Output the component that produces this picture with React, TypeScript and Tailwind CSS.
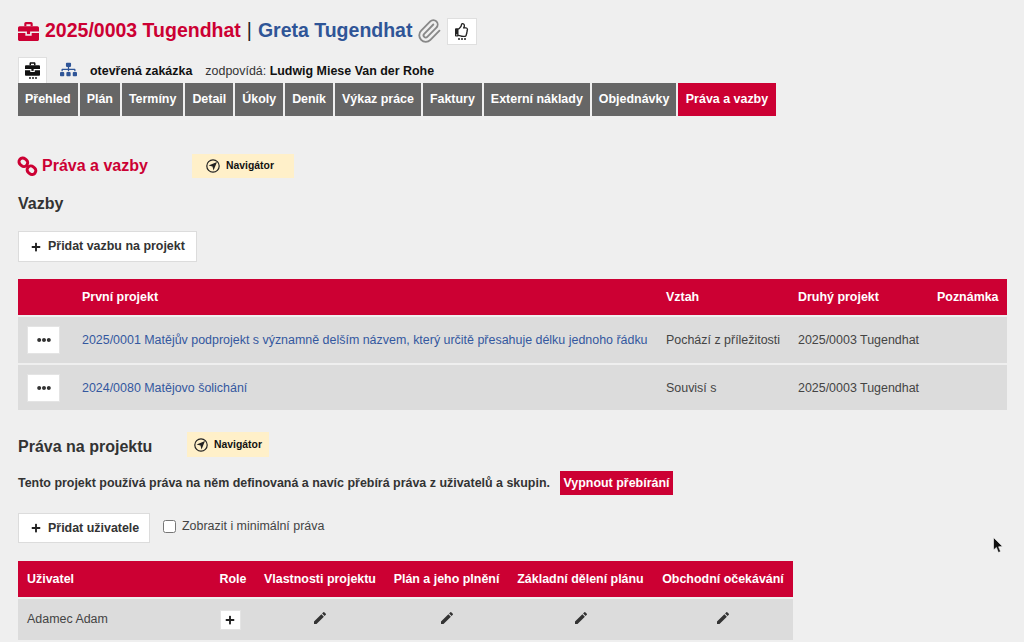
import React from 'react';
import { FaRegThumbsUp, FaSitemap, FaPlus, FaEllipsisH } from 'react-icons/fa';
import { MdEdit } from 'react-icons/md';
import { Paperclip } from 'lucide-react';

const tabs = ['Přehled', 'Plán', 'Termíny', 'Detail', 'Úkoly', 'Deník', 'Výkaz práce', 'Faktury', 'Externí náklady', 'Objednávky'];

const Dots = () => (
  <span className="flex gap-[1px] justify-center mt-[1px]">
    <span className="w-[2px] h-[2px] rounded-full bg-[#222]" />
    <span className="w-[2px] h-[2px] rounded-full bg-[#222]" />
    <span className="w-[2px] h-[2px] rounded-full bg-[#222]" />
  </span>
);

// briefcase with a clasp, used red in the title and black in the info row
const CaseIcon = ({ width, height, className }: { width: number; height: number; className: string }) => (
  <svg width={width} height={height} viewBox="0 0 20 18" className={className}>
    <path d="M6 4V1.5C6 .7 6.7 0 7.500 0h5c.8 0 1.500.7 1.500 1.500V4h-2V2H8v2z" fill="currentColor" />
    <path d="M0 5.500C0 4.700.7 4 1.500 4h17c.8 0 1.500.7 1.500 1.500V9H0z" fill="currentColor" />
    <path d="M0 10.500h7V13h6v-2.500h7v6c0 .8-.7 1.500-1.500 1.500h-17C.7 18 0 17.300 0 16.500z" fill="currentColor" />
    <rect x="8.500" y="8.500" width="3" height="3" fill="currentColor" />
  </svg>
);

const Navigator = ({ className }: { className: string }) => (
  <div className={`flex items-center bg-[#fff0c9] text-[10.4px] font-bold text-[#111] ${className}`}>
    <svg width="14" height="14" viewBox="0 0 14 14" className="mr-[6px]">
      <circle cx="7" cy="7" r="6.2" fill="none" stroke="#222" strokeWidth="1.200" />
      <path d="M11 3 L2.600 6.500 L6.500 7.500 L7.500 11.400 Z" fill="#222" />
    </svg>
    Navigátor
  </div>
);

const LinkRow = ({ name, relation, textClass }: { name: string; relation: string; textClass: string }) => (
  <div className="grid grid-cols-[64px_584px_132px_139px_70px] items-center bg-[#dcdcdc] text-[12.44px] text-[#444]">
    <div className="pl-[9px]">
      <button className="flex items-center justify-center w-[33px] h-[28px] bg-white border border-[#e4e4e4]">
        <FaEllipsisH className="text-[#333] text-[14px]" />
      </button>
    </div>
    <a className={`text-[#34589f] ${textClass}`}>{name}</a>
    <div className={textClass}>{relation}</div>
    <div className={textClass}>2025/0003 Tugendhat</div>
    <div />
  </div>
);

export default function App() {
  return (
    <div className="relative h-[642px] overflow-hidden bg-[#efefef] pl-[18px] font-['Liberation_Sans',Arial,sans-serif] text-[#333]">
      {/* Title */}
      <div className="flex items-center h-[30px] mt-[16px] text-[19.5px] font-bold">
        <CaseIcon width={21} height={19} className="text-[#cc0033] mr-[6px]" />
        <span className="text-[#cc0033]">2025/0003 Tugendhat</span>
        <span className="text-[#222] mx-[6px] font-normal">|</span>
        <span className="text-[#2f5597]">Greta Tugendhat</span>
        <Paperclip size={26} strokeWidth={1.700} className="text-[#888] ml-[4px]" />
        <div className="flex flex-col items-center justify-center ml-[5px] w-[30px] h-[27px] bg-white border border-[#dfdfdf]">
          <FaRegThumbsUp className="text-[#222] text-[14px]" />
          <Dots />
        </div>
      </div>

      {/* Project info */}
      <div className="flex items-end h-[26px] mt-[11px] text-[12.44px] text-[#111]">
        <div className="flex flex-col items-center justify-center w-[29px] h-[26px] bg-white border border-[#dfdfdf] border-b-0">
          <CaseIcon width={15} height={14} className="text-[#111]" />
          <Dots />
        </div>
        <FaSitemap className="text-[#2f5597] text-[17px] ml-[13px] mb-[5px]" />
        <b className="ml-[13px] mb-[2px]">otevřená zakázka</b>
        <span className="ml-[13px] mb-[2px] text-[#333]">zodpovídá: <b className="text-[#111]">Ludwig Miese Van der Rohe</b></span>
      </div>

      {/* Tabs */}
      <div className="flex gap-[2px] h-[33px] text-[12.44px] font-bold text-white">
        {tabs.map((tab) => (
          <div key={tab} className="flex items-center px-[7px] bg-[#666]">{tab}</div>
        ))}
        <div className="flex items-center px-[7.5px] bg-[#cc0033]">Práva a vazby</div>
      </div>

      {/* Section heading */}
      <div className="flex items-center h-[24px] mt-[38px]">
        <svg width="21" height="21" viewBox="0 0 21 21" className="-ml-[1px] mr-[4px]">
          <rect x="1.800" y="2.500" width="9" height="7.500" rx="3.700" transform="rotate(40 6.300 6.300)" fill="none" stroke="#cc0033" strokeWidth="3" />
          <rect x="10" y="10.500" width="9" height="7.500" rx="3.700" transform="rotate(40 14.500 14.200)" fill="none" stroke="#cc0033" strokeWidth="3" />
        </svg>
        <h1 className="w-[150px] text-[16px] font-bold text-[#cc0033]">Práva a vazby</h1>
        <Navigator className="w-[102px] h-[24px] pl-[14px]" />
      </div>

      <h2 className="mt-[16px] h-[20px] text-[16px] leading-[20px] font-bold">Vazby</h2>
      <button className="flex items-center mt-[17px] w-[179px] h-[31px] pl-[12px] bg-white border border-[#dcdcdc] text-[12.44px] font-bold">
        <FaPlus className="text-[#222] text-[10px] mr-[7px]" />
        Přidat vazbu na projekt
      </button>

      {/* First table */}
      <div className="mt-[17px] w-[989px] flex flex-col gap-[2px]">
        <div className="grid grid-cols-[64px_584px_132px_139px_70px] items-center h-[36px] bg-[#cc0033] text-[12.44px] font-bold text-white">
          <div />
          <div>První projekt</div>
          <div>Vztah</div>
          <div>Druhý projekt</div>
          <div>Poznámka</div>
        </div>
        <div className="h-[46px] grid"><LinkRow name="2025/0001 Matějův podprojekt s významně delším názvem, který určitě přesahuje délku jednoho řádku" relation="Pochází z příležitosti" textClass="" /></div>
        <div className="h-[45px] grid"><LinkRow name="2024/0080 Matějovo šolichání" relation="Souvisí s" textClass="pt-[2px]" /></div>
      </div>

      {/* Rights */}
      <div className="flex items-start h-[26px] mt-[22px]">
        <h2 className="w-[169px] mt-[3px] text-[16px] leading-[24px] font-bold">Práva na projektu</h2>
        <Navigator className="w-[82px] h-[25px] pl-[7px]" />
      </div>
      <div className="flex items-center h-[24px] mt-[13px] text-[12.44px] font-bold">
        <span className="pt-[1px]">Tento projekt používá práva na něm definovaná a navíc přebírá práva z uživatelů a skupin.</span>
        <span className="flex items-center h-[24px] ml-[10px] px-[3.5px] bg-[#cc0033] text-white">Vypnout přebírání</span>
      </div>

      <div className="flex items-start mt-[18px]">
        <button className="flex items-center w-[132px] h-[30px] pl-[12px] bg-white border border-[#dcdcdc] text-[12.44px] font-bold">
          <FaPlus className="text-[#222] text-[10px] mr-[7px]" />
          Přidat uživatele
        </button>
        <label className="flex items-center ml-[13px] mt-[4px] text-[12.44px] text-[#444]">
          <input type="checkbox" className="w-[13px] h-[13px] m-0 mr-[6px]" />
          Zobrazit i minimální práva
        </label>
      </div>

      {/* Second table */}
      <div className="mt-[18px] w-[775px] flex flex-col gap-[2px]">
        <div className="grid grid-cols-[193px_44px_130px_123px_145px_140px] items-center h-[36px] bg-[#cc0033] text-[12.44px] font-bold text-white text-center">
          <div className="pl-[9px] text-left">Uživatel</div>
          <div>Role</div>
          <div>Vlastnosti projektu</div>
          <div>Plán a jeho plnění</div>
          <div>Základní dělení plánu</div>
          <div>Obchodní očekávání</div>
        </div>
        <div className="grid grid-cols-[193px_44px_130px_123px_145px_140px] items-center h-[41px] bg-[#dcdcdc] text-[12.44px] text-[#444]">
          <div className="pl-[9px]">Adamec Adam</div>
          <div className="flex justify-center pr-[6px]">
            <span className="flex items-center justify-center w-[21px] h-[20px] bg-white border border-[#e4e4e4]">
              <FaPlus className="text-[#222] text-[10px]" />
            </span>
          </div>
          {[0, 1, 2, 3].map((i) => (
            <div key={i} className="flex justify-center pb-[3px]"><MdEdit className="text-[#333] text-[16px]" /></div>
          ))}
        </div>
      </div>

      {/* Mouse cursor from the capture */}
      <svg width="12" height="18" viewBox="0 0 12 18" className="absolute left-[993px] top-[537px]">
        <path d="M0.500 0.500 L0.500 13 L3.400 10.400 L5.400 15.500 L7.600 14.600 L5.600 9.800 L9.600 9.600 Z" fill="#111" stroke="#fff" strokeWidth="0.600" />
      </svg>
    </div>
  );
}
